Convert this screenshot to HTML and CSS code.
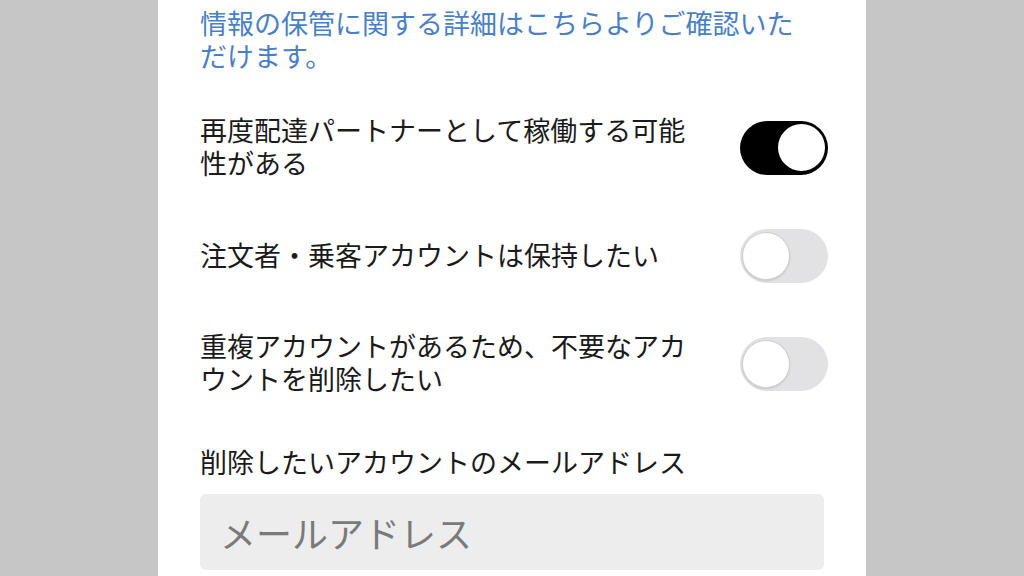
FILE: index.html
```html
<!DOCTYPE html>
<html lang="ja">
<head>
    <meta charset="UTF-8">
    <meta name="viewport" content="width=device-width, initial-scale=1.0">
    <title>アカウント削除</title>
    <link rel="stylesheet" href="styles.css">
</head>
<body>

    <div class="panel">
        <!-- Info link -->
        <p class="info-link">情報の保管に関する詳細はこちらよりご確認いただけます。</p>

        <!-- Options -->
        <div class="option">
            <span class="option-text">再度配達パートナーとして稼働する可能性がある</span>
            <div class="toggle on"><span class="knob"></span></div>
        </div>

        <div class="option">
            <span class="option-text">注文者・乗客アカウントは保持したい</span>
            <div class="toggle"><span class="knob"></span></div>
        </div>

        <div class="option">
            <span class="option-text">重複アカウントがあるため、不要なアカウントを削除したい</span>
            <div class="toggle"><span class="knob"></span></div>
        </div>

        <!-- Email field -->
        <label class="field-label" for="email">削除したいアカウントのメールアドレス</label>
        <input class="email-input" id="email" type="text" placeholder="メールアドレス">
    </div>

</body>
</html>
```

FILE: styles.css
```css
html, body {
    height: 100%;
}

body {
    font-family: "Noto Sans CJK JP", "Noto Sans", sans-serif;
    background-color: #c6c6c6;
    margin: 0;
    padding: 0;
    overflow: hidden;
}

.panel {
    width: 624px;
    min-height: 100%;
    margin: 0 auto;
    padding: 6px 42px 0;
    background-color: white;
    color: #1a1a1a;
    font-size: 27px;
    line-height: 33px;
}

.info-link {
    width: 600px;
    margin: 0 0 41px;
    color: #4a7fc4;
}

.option {
    display: flex;
    justify-content: space-between;
    align-items: center;
    margin-bottom: 46px;
}

.option-text {
    width: 500px;
    padding-bottom: 4px;
}

.toggle {
    position: relative;
    flex-shrink: 0;
    width: 88px;
    height: 54px;
    margin-right: -4px;
    border-radius: 27px;
    background-color: #e2e2e4;
}

.toggle .knob {
    position: absolute;
    top: 3px;
    left: 2px;
    width: 46px;
    height: 46px;
    border-radius: 50%;
    background: white;
    border: 1px solid #cfcfcf;
    box-shadow: 0px 1px 2px rgba(0, 0, 0, 0.12);
}

.toggle.on {
    background-color: black;
}

.toggle.on .knob {
    left: auto;
    right: 3px;
    border: none;
    width: 47px;
    height: 47px;
    box-shadow: none;
}

.field-label {
    display: block;
}

.email-input {
    display: block;
    box-sizing: border-box;
    width: 100%;
    height: 76px;
    margin-top: 16px;
    padding: 0 20px;
    border: none;
    border-radius: 6px;
    background-color: #ededed;
    font-family: inherit;
    font-size: 36px;
    color: #333;
    outline: none;
}

.email-input::placeholder {
    color: #7a7a7a;
}
```
